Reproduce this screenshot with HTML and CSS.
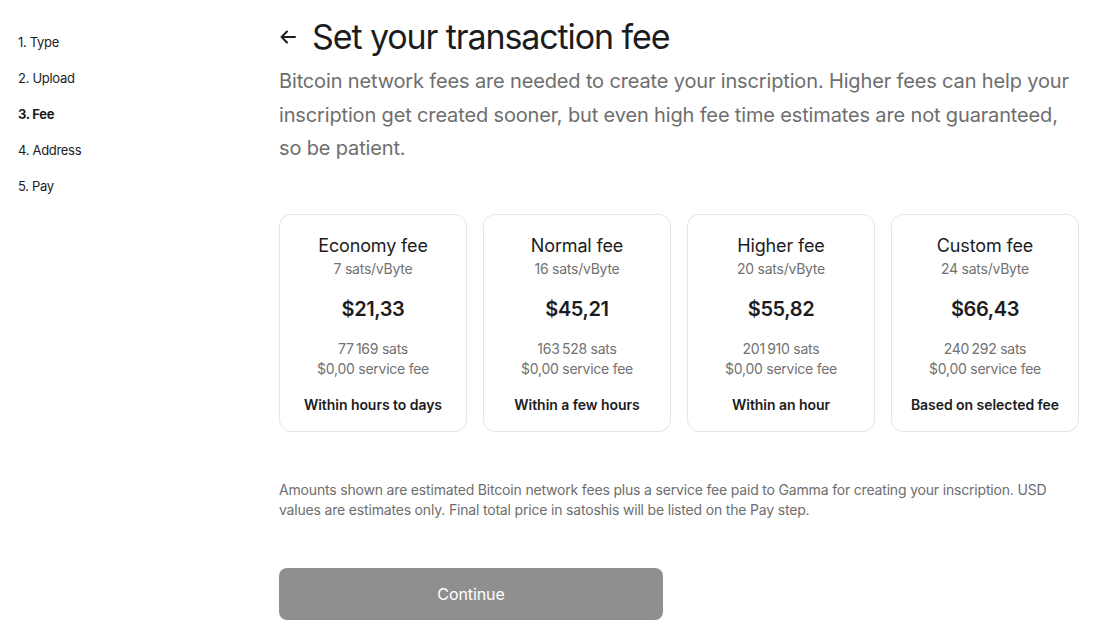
FILE: index.html
```html
<!DOCTYPE html>
<html lang="en">
<head>
<meta charset="utf-8">
<title>Set your transaction fee</title>
<link rel="stylesheet" href="styles.css">
</head>
<body>
<div class="page">
  <nav class="steps">
    <div class="step">1. Type</div>
    <div class="step">2. Upload</div>
    <div class="step active">3. Fee</div>
    <div class="step">4. Address</div>
    <div class="step">5. Pay</div>
  </nav>
  <main class="main">
    <h1 class="title">
      <svg class="back" width="18" height="18" viewBox="0 0 18 18" fill="none" stroke="#1c1c1e" stroke-width="2" stroke-linecap="round" stroke-linejoin="round"><path d="M16 9H2.5M8 3.5L2.5 9l5.5 5.5"/></svg>
      <span>Set your transaction fee</span>
    </h1>
    <p class="lead">Bitcoin network fees are needed to create your inscription. Higher fees can help your inscription get created sooner, but even high fee time estimates are not guaranteed, so be patient.</p>
    <div class="cards">
      <div class="card">
        <div class="card-name">Economy fee</div>
        <div class="card-sub">7 sats/vByte</div>
        <div class="card-price">$21,33</div>
        <div class="card-sub">77&#8201;169 sats</div>
        <div class="card-sub">$0,00 service fee</div>
        <div class="card-time">Within hours to days</div>
      </div>
      <div class="card">
        <div class="card-name">Normal fee</div>
        <div class="card-sub">16 sats/vByte</div>
        <div class="card-price">$45,21</div>
        <div class="card-sub">163&#8201;528 sats</div>
        <div class="card-sub">$0,00 service fee</div>
        <div class="card-time">Within a few hours</div>
      </div>
      <div class="card">
        <div class="card-name">Higher fee</div>
        <div class="card-sub">20 sats/vByte</div>
        <div class="card-price">$55,82</div>
        <div class="card-sub">201&#8201;910 sats</div>
        <div class="card-sub">$0,00 service fee</div>
        <div class="card-time">Within an hour</div>
      </div>
      <div class="card">
        <div class="card-name">Custom fee</div>
        <div class="card-sub">24 sats/vByte</div>
        <div class="card-price">$66,43</div>
        <div class="card-sub">240&#8201;292 sats</div>
        <div class="card-sub">$0,00 service fee</div>
        <div class="card-time">Based on selected fee</div>
      </div>
    </div>
    <p class="note">Amounts shown are estimated Bitcoin network fees plus a service fee paid to Gamma for creating your inscription. USD values are estimates only. Final total price in satoshis will be listed on the Pay step.</p>
    <button class="continue" type="button">Continue</button>
  </main>
</div>
</body>
</html>
```
FILE: styles.css
```css
* { box-sizing: border-box; }
html, body { margin: 0; padding: 0; background: #fff; }
body {
  font-family: Inter, "Noto Sans", "Liberation Sans", sans-serif;
  color: #1c1c1e;
}
.page {
  display: flex;
  width: 1108px;
  min-height: 635px;
}
.steps {
  width: 279px;
  flex: none;
  padding: 32px 0 0 18px;
  display: flex;
  flex-direction: column;
  gap: 16px;
}
.step {
  font-size: 13px;
  line-height: 20px;
  letter-spacing: -0.3px;
  color: #1c1c1e;
}
.step.active { font-weight: 700; }
.main {
  width: 800px;
  padding-top: 17px;
}
.title {
  margin: 0;
  display: flex;
  align-items: center;
  gap: 15px;
  font-size: 34px;
  font-weight: 400;
  line-height: 40px;
  letter-spacing: -1.1px;
}
.back { flex: none; margin-left: 0; }
.lead {
  margin: 8px 0 0;
  font-size: 20px;
  line-height: 33.5px;
  letter-spacing: -0.15px;
  color: #6e6e6e;
}
.cards {
  margin-top: 48px;
  display: grid;
  grid-template-columns: repeat(4, 1fr);
  gap: 16px;
}
.card {
  border: 1px solid #e5e5e5;
  border-radius: 12px;
  padding: 19px 8px 15px;
  display: flex;
  flex-direction: column;
  align-items: center;
  text-align: center;
  height: 218px;
}
.card-name {
  font-size: 18px;
  line-height: 24px;
  letter-spacing: -0.15px;
}
.card-sub {
  font-size: 14px;
  line-height: 20px;
  letter-spacing: -0.25px;
  color: #727272;
}
.card-name + .card-sub { margin-top: 1px; }
.card-price {
  margin: 16px 0;
  font-size: 20px;
  line-height: 28px;
  font-weight: 600;
  letter-spacing: -0.4px;
}
.card-time {
  margin-top: 16px;
  font-size: 14px;
  line-height: 20px;
  font-weight: 600;
  letter-spacing: -0.05px;
}
.note {
  margin: 48px 0 0;
  font-size: 14px;
  line-height: 20px;
  letter-spacing: -0.18px;
  color: #6e6e6e;
}
.continue {
  margin-top: 48px;
  width: 384px;
  height: 52px;
  border: none;
  border-radius: 8px;
  background: #8f8f8f;
  color: #fff;
  font-family: inherit;
  font-size: 16px;
  letter-spacing: -0.1px;
}
```
